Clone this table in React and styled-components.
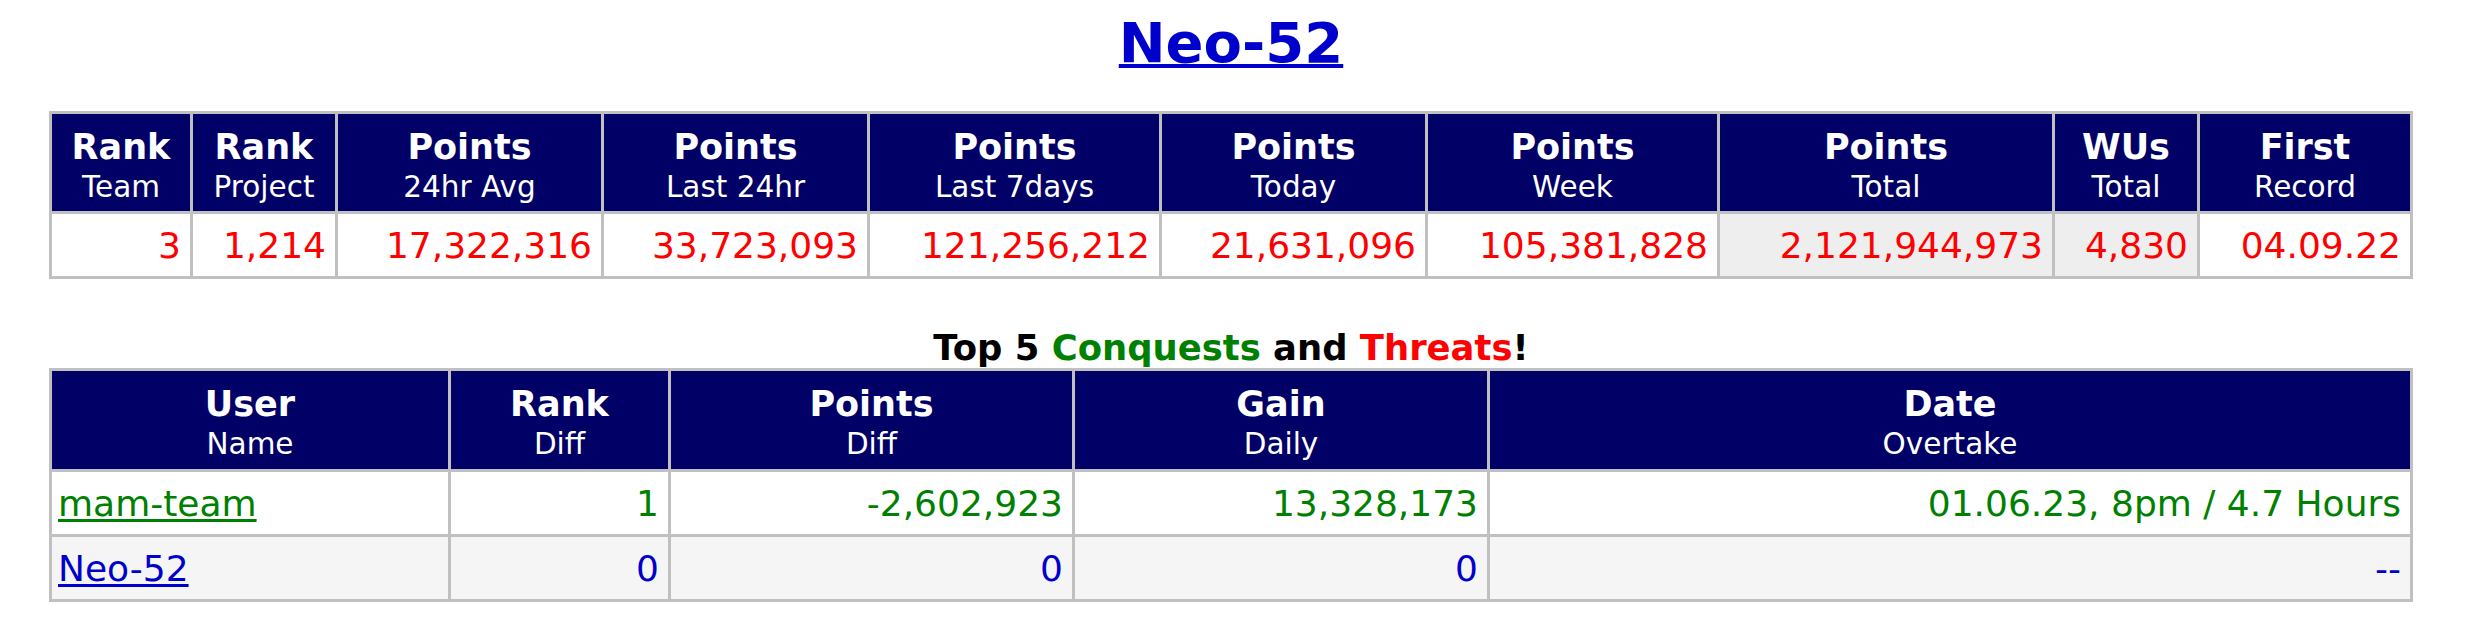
import React from "react";
import styled, { createGlobalStyle } from "styled-components";

const GlobalStyle = createGlobalStyle`
  body {
    margin: 0;
    background: #fff;
    font-family: Verdana, "DejaVu Sans", sans-serif;
  }
`;

const RED = "#ff0000";
const GREEN = "#008000";
const BLUE = "#0000cc";

const Page = styled.div`
  width: 2364px;
  padding: 10px 0 0 49px;
`;

const Title = styled.h1`
  margin: 0 0 36px;
  font-size: 56px;
  line-height: 65px;
  font-weight: bold;
  text-align: center;
`;

const TitleLink = styled.a`
  color: ${BLUE};
  text-decoration: underline;
  text-decoration-thickness: 4px;
  text-underline-offset: 2px;
`;

const Grid = styled.div`
  display: grid;
  grid-template-columns: ${(p) => p.$cols};
  gap: 3px;
  padding: 3px;
  background: #c0c0c0;
`;

const HeadCell = styled.div`
  background: #000066;
  color: #fff;
  text-align: center;
  padding: 12px 4px ${(p) => p.$pb || 5}px;
`;

const Main = styled.span`
  display: block;
  font-size: 35px;
  line-height: 42px;
  font-weight: bold;
`;

const Sub = styled.span`
  display: block;
  font-size: 29.5px;
  line-height: 38px;
`;

const Cell = styled.div`
  background: ${(p) => p.$bg || "#fff"};
  color: ${(p) => p.$color || RED};
  font-size: 36px;
  line-height: 42px;
  padding: 11px 9px 9px 6px;
  text-align: ${(p) => p.$align || "right"};
  white-space: nowrap;
`;

const UserLink = styled.a`
  color: ${(p) => p.$color};
  text-decoration: underline;
  text-decoration-thickness: 3px;
  text-underline-offset: 3px;
`;

const Heading = styled.h2`
  margin: 48px 0 0;
  font-size: 35.4px;
  line-height: 41px;
  font-weight: bold;
  text-align: center;
  color: #000;
`;

const Word = styled.span`
  color: ${(p) => p.$color};
`;

// stats table
const statCols = "138px 142px 263px 263px 289px 263px 289px 332px 142px 210px";
const statHeads = [
  ["Rank", "Team"],
  ["Rank", "Project"],
  ["Points", "24hr Avg"],
  ["Points", "Last 24hr"],
  ["Points", "Last 7days"],
  ["Points", "Today"],
  ["Points", "Week"],
  ["Points", "Total"],
  ["WUs", "Total"],
  ["First", "Record"],
];
const statVals = [
  "3",
  "1,214",
  "17,322,316",
  "33,723,093",
  "121,256,212",
  "21,631,096",
  "105,381,828",
  "2,121,944,973",
  "4,830",
  "04.09.22",
];
const shaded = [7, 8];

// conquests table
const rivalCols = "396px 217px 401px 412px 920px";
const rivalHeads = [
  ["User", "Name"],
  ["Rank", "Diff"],
  ["Points", "Diff"],
  ["Gain", "Daily"],
  ["Date", "Overtake"],
];
const rivals = [
  { name: "mam-team", color: GREEN, bg: "#fff", vals: ["1", "-2,602,923", "13,328,173", "01.06.23, 8pm / 4.7 Hours"] },
  { name: "Neo-52", color: BLUE, bg: "#f5f5f5", vals: ["0", "0", "0", "--"] },
];

export default function App() {
  return (
    <>
      <GlobalStyle />
      <Page>
        <Title>
          <TitleLink href="#">Neo-52</TitleLink>
        </Title>

        <Grid $cols={statCols}>
          {statHeads.map(([m, s], i) => (
            <HeadCell key={"h" + i}>
              <Main>{m}</Main>
              <Sub>{s}</Sub>
            </HeadCell>
          ))}
          {statVals.map((v, i) => (
            <Cell key={"v" + i} $bg={shaded.includes(i) ? "#eeeeee" : "#fff"}>
              {v}
            </Cell>
          ))}
        </Grid>

        <Heading>
          Top 5 <Word $color={GREEN}>Conquests</Word> and <Word $color={RED}>Threats</Word>!
        </Heading>

        <Grid $cols={rivalCols}>
          {rivalHeads.map(([m, s], i) => (
            <HeadCell key={"h" + i} $pb={6}>
              <Main>{m}</Main>
              <Sub>{s}</Sub>
            </HeadCell>
          ))}
          {rivals.map((r) => (
            <React.Fragment key={r.name}>
              <Cell $align="left" $bg={r.bg} $color={r.color}>
                <UserLink href="#" $color={r.color}>{r.name}</UserLink>
              </Cell>
              {r.vals.map((v, i) => (
                <Cell key={i} $bg={r.bg} $color={r.color}>
                  {v}
                </Cell>
              ))}
            </React.Fragment>
          ))}
        </Grid>
      </Page>
    </>
  );
}
